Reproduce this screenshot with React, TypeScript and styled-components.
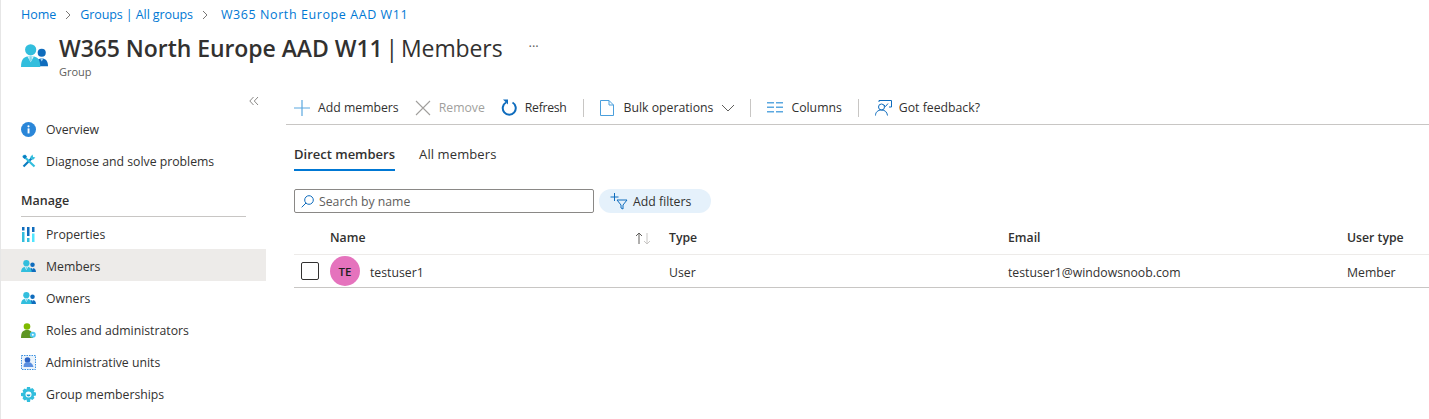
import React from 'react';
import styled, { createGlobalStyle } from 'styled-components';

const GlobalStyle = createGlobalStyle`
  html, body {
    margin: 0;
    padding: 0;
    background: #fff;
    overflow: hidden;
  }
  body {
    font-family: 'Open Sans', 'Noto Sans', 'Liberation Sans', sans-serif;
    font-size: 12.25px;
    color: #323130;
  }
`;

const Page = styled.div`
  width: 1429px;
  height: 419px;
  overflow: hidden;
  border-left: 1px solid #e6e6e6;
  box-sizing: border-box;
`;

const Breadcrumb = styled.nav`
  display: flex;
  align-items: center;
  height: 28px;
  padding-left: 20px;
  color: #0078d4;
  font-size: 12.5px;
`;

const CrumbText = styled.span<{ $spacing?: number; $left?: number }>`
  letter-spacing: ${(p) => p.$spacing ?? 0}px;
  margin-left: ${(p) => p.$left ?? 0}px;
  white-space: nowrap;
`;

const Chevron = styled.svg`
  width: 8px;
  height: 10px;
  margin: 1px 8px 0 8px;
  fill: none;
  stroke: #797775;
  stroke-width: 1;
`;

const Header = styled.header`
  display: flex;
  height: 60px;
  padding-left: 20px;
`;

const HeaderIcon = styled.div`
  display: flex;
  width: 38px;
  padding-top: 16px;
`;

const TitleBlock = styled.div`
  display: flex;
  flex-direction: column;
`;

const TitleRow = styled.div`
  display: flex;
  align-items: center;
  height: 39px;
`;

const Title = styled.h1`
  margin: 0;
  font-size: 23px;
  font-weight: 600;
  letter-spacing: -0.06px;
  color: #323130;
  white-space: nowrap;
`;

const TitlePage = styled.span`
  font-weight: 400;
  margin-left: 3px;
  word-spacing: -3px;
  letter-spacing: -0.1px;
`;

const More = styled.span`
  margin-left: 26px;
  margin-top: -3px;
  font-size: 13px;
  color: #605e5c;
`;

const Subtitle = styled.div`
  font-size: 11px;
  color: #605e5c;
  margin-top: -3px;
`;

const Body = styled.div`
  display: flex;
`;

const Sidebar = styled.aside`
  width: 265px;
  flex-shrink: 0;
`;

const Collapse = styled.div`
  display: flex;
  justify-content: flex-end;
  align-items: center;
  height: 25px;
  padding-right: 7px;
  color: #8a8886;
`;

const NavItem = styled.div<{ $active?: boolean }>`
  display: flex;
  align-items: center;
  box-sizing: border-box;
  height: 32px;
  padding-left: 20px;
  gap: 10px;
  background: ${(p) => (p.$active ? '#edebe9' : 'transparent')};
  white-space: nowrap;
`;

const ManageItem = styled(NavItem)`
  padding-top: 2px;
`;

const NavIcon = styled.span`
  display: flex;
  justify-content: center;
  width: 15px;
`;

const SectionLabel = styled.div`
  margin: 7px 20px 0 20px;
  width: 225px;
  height: 32px;
  display: flex;
  align-items: center;
  border-bottom: 1px solid #c8c6c4;
  font-size: 12.5px;
  font-weight: 600;
`;

const Main = styled.main`
  flex: 1;
  margin-left: 20px;
  min-width: 0;
  margin-top: 3px;
`;

const Toolbar = styled.div`
  display: flex;
  align-items: center;
  box-sizing: border-box;
  height: 34px;
  padding-left: 8px;
  border-bottom: 1px solid #c8c6c4;
`;

const ToolButton = styled.div<{ $disabled?: boolean; $gap?: number; $right?: number; $spacing?: number }>`
  display: flex;
  align-items: center;
  gap: ${(p) => p.$gap ?? 8}px;
  margin-right: ${(p) => p.$right ?? 0}px;
  letter-spacing: ${(p) => p.$spacing ?? 0}px;
  color: ${(p) => (p.$disabled ? '#a19f9d' : '#323130')};
  white-space: nowrap;
`;

const ChevronDown = styled.svg`
  margin: 0 -1px 0 -2px;
`;

const ToolDivider = styled.div`
  width: 1px;
  height: 18px;
  background: #c8c6c4;
  margin: 0 16px;
`;

const Content = styled.div`
  padding-left: 8px;
`;

const Tabs = styled.div`
  display: flex;
  gap: 24px;
  padding-top: 14px;
`;

const Tab = styled.div<{ $active?: boolean }>`
  height: 30px;
  display: flex;
  align-items: center;
  font-size: 13px;
  letter-spacing: ${(p) => (p.$active ? 0 : 0.1)}px;
  font-weight: ${(p) => (p.$active ? 600 : 400)};
  border-bottom: 2px solid ${(p) => (p.$active ? '#0078d4' : 'transparent')};
`;

const FilterBar = styled.div`
  display: flex;
  gap: 5px;
  margin-top: 18px;
`;

const SearchBox = styled.div`
  box-sizing: border-box;
  width: 300px;
  height: 24px;
  display: flex;
  align-items: center;
  gap: 5px;
  padding-left: 6px;
  border: 1px solid #8a8886;
  border-radius: 2px;
  color: #605e5c;
`;

const FilterPill = styled.div`
  box-sizing: border-box;
  width: 112px;
  height: 24px;
  display: flex;
  align-items: center;
  gap: 5px;
  padding-left: 11px;
  border-radius: 12px;
  background: #e5f1fb;
`;

const TableGrid = styled.div`
  display: grid;
  grid-template-columns: 36px 339px 339px 339px 1fr;
  margin-top: 8px;
`;

const HeadCell = styled.div`
  position: relative;
  height: 33px;
  display: flex;
  align-items: center;
  font-weight: 600;
  border-bottom: 1px solid #edebe9;
  white-space: nowrap;
`;

const SortIcon = styled.svg`
  position: absolute;
  right: 17px;
  top: 10px;
  width: 18px;
  height: 14px;
  fill: none;
`;

const Cell = styled.div`
  height: 32px;
  display: flex;
  align-items: center;
  border-bottom: 1px solid #c8c6c4;
  white-space: nowrap;
`;

const CellText = styled.span`
  padding-top: 3px;
`;

const CheckBox = styled.div`
  box-sizing: border-box;
  width: 18px;
  height: 18px;
  margin-left: 7px;
  border: 1px solid #323130;
  border-radius: 2px;
`;

const Avatar = styled.div`
  width: 30px;
  height: 30px;
  border-radius: 50%;
  background: #e573bd;
  color: #201f1e;
  display: flex;
  align-items: center;
  justify-content: center;
  font-size: 11.5px;
  font-weight: 600;
  margin-right: 10px;
`;

const GroupIcon = ({ size = 15 }: { size?: number }) => (
  <svg width={size} height={size * 0.86} viewBox="0 0 28 24">
    <circle cx="21.500" cy="9" r="4.200" fill="#0f6cbd" />
    <path d="M15 23c0-5.500 2.500-8 6.500-8s6.500 2.500 6.500 8z" fill="#0f6cbd" />
    <path d="M19.800 15h3.400l-1.700 3z" fill="#9fd4f5" />
    <circle cx="10" cy="6" r="5.800" fill="#32bedd" />
    <path d="M0 24c0-8 3-11.500 10-11.500S20 16 20 24z" fill="#32bedd" />
    <path d="M6.500 12.600L10 19l3.500-6.400z" fill="#d8f2fa" />
    <path d="M9 13h2l.3 3-1.300 2.500L8.700 16z" fill="#7fd6ea" />
  </svg>
);

const InfoIcon = () => (
  <svg width="15" height="15" viewBox="0 0 15 15">
    <circle cx="7.500" cy="7.500" r="7.500" fill="#2a86d8" />
    <rect x="6.600" y="6.400" width="1.900" height="5" fill="#fff" />
    <circle cx="7.500" cy="4.300" r="1.100" fill="#fff" />
  </svg>
);

const ToolsIcon = () => (
  <svg width="14" height="14" viewBox="0 0 14 14" fill="none">
    <path d="M1.500 12.500L9.500 4.500" stroke="#0a7cc1" strokeWidth="2.200" />
    <path d="M8 3.200L10.500 .6l.6 2.300 2.300.5-2.500 2.600z" fill="#32bedd" />
    <path d="M1 1.500L12.500 12.500" stroke="#32bedd" strokeWidth="2.200" />
    <path d="M.5 3L3 .5l2 2-2.500 2.500z" fill="#0a7cc1" />
  </svg>
);

const PropertiesIcon = () => (
  <svg width="13" height="15" viewBox="0 0 13 15">
    <rect x="0" y="0" width="2.500" height="3.500" fill="#0f6cbd" />
    <rect x="0" y="5" width="2.500" height="10" fill="#32bedd" />
    <rect x="5" y="0" width="2.500" height="9" fill="#0f6cbd" />
    <rect x="5" y="11" width="2.500" height="4" fill="#32bedd" />
    <rect x="10" y="0" width="2.500" height="5" fill="#0f6cbd" />
    <rect x="10" y="6.500" width="2.500" height="8.500" fill="#50e6ff" />
  </svg>
);

const RolesIcon = () => (
  <svg width="15" height="15" viewBox="0 0 15 15">
    <circle cx="6" cy="3.500" r="3.300" fill="#7fba00" />
    <path d="M0 15c0-6 2-8 6-8s6 2 6 8z" fill="#5e9624" />
    <circle cx="11.800" cy="11.800" r="3" fill="#50c8ef" />
    <circle cx="11.800" cy="11.800" r="1" fill="#fff" />
  </svg>
);

const UnitsIcon = () => (
  <svg width="15" height="15" viewBox="0 0 15 15">
    <rect x=".5" y=".5" width="14" height="14" fill="#eaf3fb" stroke="#3c91e0" strokeDasharray="1.500 1" />
    <circle cx="6.500" cy="5" r="2.800" fill="#2b63c4" />
    <path d="M2.500 12c0-3.500 1.500-5 4-5s5 1 6 5z" fill="#5a8fe0" />
  </svg>
);

const GearIcon = () => (
  <svg width="15" height="15" viewBox="0 0 15 15">
    <path
      d="M6 0h3l.5 2 1.900-.9 2.100 2.100-.9 1.900 2.400.4v3l-2.400.5.9 1.900-2.100 2.100-1.900-.9L9 15H6l-.5-2.400-1.900.9-2.100-2.100.9-1.900L0 9V6l2.400-.5-.9-1.900 2.100-2.100 1.900.9z"
      fill="#32bedd"
    />
    <circle cx="7.500" cy="7.500" r="3" fill="#fff" />
    <path d="M5.500 7.500a2 2 0 0 0 4 0z" fill="#0f9fd0" />
  </svg>
);

const NextIcon = () => (
  <svg width="15" height="15" viewBox="0 0 15 15">
    <rect width="15" height="15" fill="#d5e9f8" />
  </svg>
);

const navTop = [
  { label: 'Overview', icon: <InfoIcon /> },
  { label: 'Diagnose and solve problems', icon: <ToolsIcon /> },
];

const navManage = [
  { label: 'Properties', icon: <PropertiesIcon /> },
  { label: 'Members', icon: <GroupIcon />, active: true },
  { label: 'Owners', icon: <GroupIcon /> },
  { label: 'Roles and administrators', icon: <RolesIcon /> },
  { label: 'Administrative units', icon: <UnitsIcon /> },
  { label: 'Group memberships', icon: <GearIcon /> },
];

const Crumb = () => (
  <Chevron viewBox="0 0 8 10">
    <path d="M2 1l4 4-4 4" />
  </Chevron>
);

export default function App() {
  return (
    <Page>
      <GlobalStyle />
      <Breadcrumb>
        <CrumbText>Home</CrumbText>
        <Crumb />
        <CrumbText $spacing={-0.1}>Groups | All groups</CrumbText>
        <Crumb />
        <CrumbText $spacing={0.58} $left={4}>
          W365 North Europe AAD W11
        </CrumbText>
      </Breadcrumb>
      <Header>
        <HeaderIcon>
          <GroupIcon size={27} />
        </HeaderIcon>
        <TitleBlock>
          <TitleRow>
            <Title>
              W365 North Europe AAD W11<TitlePage>| Members</TitlePage>
            </Title>
            <More>···</More>
          </TitleRow>
          <Subtitle>Group</Subtitle>
        </TitleBlock>
      </Header>
      <Body>
        <Sidebar>
          <Collapse>
            <svg width="10" height="10" viewBox="0 0 10 10" fill="none" stroke="#8a8886">
              <path d="M4.500 1L.8 5l3.700 4M9 1L5.300 5 9 9" />
            </svg>
          </Collapse>
          {navTop.map((item) => (
            <NavItem key={item.label}>
              <NavIcon>{item.icon}</NavIcon>
              {item.label}
            </NavItem>
          ))}
          <SectionLabel>Manage</SectionLabel>
          {navManage.map((item) => (
            <ManageItem key={item.label} $active={item.active}>
              <NavIcon>{item.icon}</NavIcon>
              {item.label}
            </ManageItem>
          ))}
          <ManageItem>
            <NavIcon>
              <NextIcon />
            </NavIcon>
          </ManageItem>
        </Sidebar>
        <Main>
          <Toolbar>
            <ToolButton $right={16}>
              <svg width="16" height="16" viewBox="0 0 16 16" stroke="#5ba8e0" strokeWidth="1.200">
                <path d="M8 0v16M0 8h16" />
              </svg>
              Add members
            </ToolButton>
            <ToolButton $disabled $gap={8} $right={16}>
              <svg width="16" height="16" viewBox="0 0 16 16" stroke="#a19f9d" strokeWidth="1.100">
                <path d="M1 1l14 14M15 1L1 15" />
              </svg>
              Remove
            </ToolButton>
            <ToolButton $gap={8} $spacing={-0.3}>
              <svg width="16" height="17" viewBox="0 0 16 17" fill="none">
                <path d="M5 3.500a6.500 6.500 0 1 0 6.500 0" stroke="#0f6cbd" strokeWidth="2" />
                <path d="M2 .5h5v5z" fill="#0f6cbd" />
              </svg>
              Refresh
            </ToolButton>
            <ToolDivider />
            <ToolButton $gap={10}>
              <svg width="14" height="16" viewBox="0 0 14 16" fill="none" stroke="#4b9fdc">
                <path d="M.5.500h8.500l4.500 4.500v10.500H.5zM9 .5V5h4.500" />
              </svg>
              Bulk operations
              <ChevronDown width="14" height="8" viewBox="0 0 14 8" fill="none" stroke="#605e5c">
                <path d="M1 1l6 6 6-6" />
              </ChevronDown>
            </ToolButton>
            <ToolDivider />
            <ToolButton $gap={8}>
              <svg width="16" height="11" viewBox="0 0 16 11" fill="#5ba8e0">
                <rect x="0" y="0" width="7" height="1.500" />
                <rect x="9" y="0" width="7" height="1.500" />
                <rect x="0" y="4.500" width="7" height="1.500" />
                <rect x="9" y="4.500" width="7" height="1.500" />
                <rect x="0" y="9" width="7" height="1.500" />
                <rect x="9" y="9" width="7" height="1.500" />
              </svg>
              Columns
            </ToolButton>
            <ToolDivider />
            <ToolButton $gap={7}>
              <svg width="17" height="16" viewBox="0 0 17 16" fill="none" stroke="#0f6cbd">
                <circle cx="6.500" cy="7" r="3" />
                <path d="M.5 15.500c0-3.500 2.500-5.500 6-5.500s5.500 2 6 5.500M4 2V.5h12.500V7H14M9 5l1.500 1.500L13 3.500" />
              </svg>
              Got feedback?
            </ToolButton>
          </Toolbar>
          <Content>
            <Tabs>
              <Tab $active>Direct members</Tab>
              <Tab>All members</Tab>
            </Tabs>
            <FilterBar>
              <SearchBox>
                <svg width="13" height="13" viewBox="0 0 13 13" fill="none" stroke="#0f6cbd">
                  <circle cx="8" cy="5" r="4.300" />
                  <path d="M5 8L.7 12.300" />
                </svg>
                Search by name
              </SearchBox>
              <FilterPill>
                <svg width="18" height="18" viewBox="0 0 18 18" fill="none" stroke="#0f6cbd">
                  <path d="M4.500 1v8M.5 5h8M7 8h10l-4 5v4l-2-1v-3z" />
                </svg>
                Add filters
              </FilterPill>
            </FilterBar>
            <TableGrid>
              <HeadCell />
              <HeadCell>
                Name
                <SortIcon viewBox="0 0 18 14">
                  <path d="M5 13V2M2 5l3-3 3 3" stroke="#605e5c" />
                  <path d="M13 2v11M10 10l3 3 3-3" stroke="#c8c6c4" />
                </SortIcon>
              </HeadCell>
              <HeadCell>Type</HeadCell>
              <HeadCell>Email</HeadCell>
              <HeadCell>User type</HeadCell>
              <Cell>
                <CheckBox />
              </Cell>
              <Cell>
                <Avatar>TE</Avatar>
                <CellText>testuser1</CellText>
              </Cell>
              <Cell>
                <CellText>User</CellText>
              </Cell>
              <Cell>
                <CellText>testuser1@windowsnoob.com</CellText>
              </Cell>
              <Cell>
                <CellText>Member</CellText>
              </Cell>
            </TableGrid>
          </Content>
        </Main>
      </Body>
    </Page>
  );
}
